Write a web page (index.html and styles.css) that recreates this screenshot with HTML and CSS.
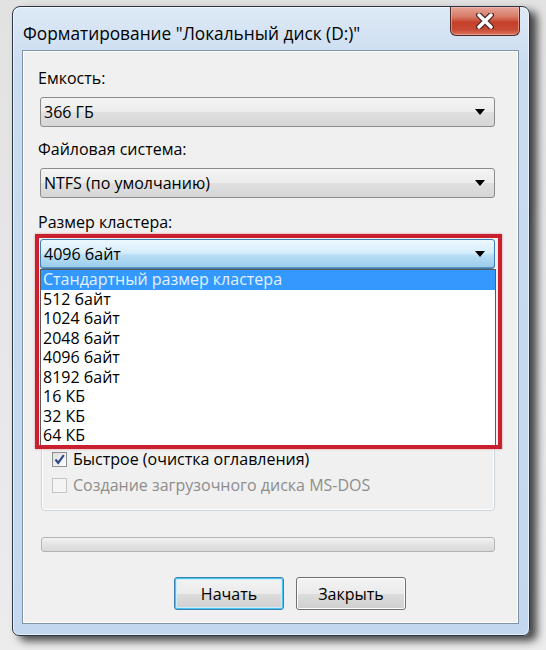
FILE: index.html
```html
<!DOCTYPE html>
<html lang="ru">
<head>
  <meta charset="UTF-8">
  <meta name="viewport" content="width=device-width, initial-scale=1.0">
  <title>Форматирование</title>
  <link rel="stylesheet" href="styles.css">
</head>
<body>
  <div class="window">
    <div class="titlebar">
      <span class="title">Форматирование "Локальный диск (D:)"</span>
      <button class="close" aria-label="Закрыть">
        <svg width="20" height="16" viewBox="0 0 20 16">
          <path d="M4 2 L16 14 M16 2 L4 14" stroke="#4a2a2a" stroke-width="6" stroke-linecap="round"/>
          <path d="M4 2 L16 14 M16 2 L4 14" stroke="#ffffff" stroke-width="3.4" stroke-linecap="round"/>
        </svg>
      </button>
    </div>

    <div class="client">
      <div class="field">
        <label class="label">Емкость:</label>
        <div class="combo"><span>366 ГБ</span><i class="arrow"></i></div>
      </div>

      <div class="field">
        <label class="label">Файловая система:</label>
        <div class="combo"><span>NTFS (по умолчанию)</span><i class="arrow"></i></div>
      </div>

      <div class="field cluster">
        <label class="label">Размер кластера:</label>
        <div class="combo-wrap">
          <div class="combo open"><span>4096 байт</span><i class="arrow"></i></div>
          <ul class="dropdown">
            <li class="selected">Стандартный размер кластера</li>
            <li>512 байт</li>
            <li>1024 байт</li>
            <li>2048 байт</li>
            <li>4096 байт</li>
            <li>8192 байт</li>
            <li>16 КБ</li>
            <li>32 КБ</li>
            <li>64 КБ</li>
          </ul>
          <div class="mark"></div>
        </div>
      </div>

      <div class="group">
        <label class="check">
          <span class="box">
            <svg width="13" height="13" viewBox="0 0 13 13">
              <path d="M2.5 6.5 L5.2 10 L10.8 2.2" fill="none" stroke="#2f4a86" stroke-width="2.2"/>
            </svg>
          </span>
          Быстрое (очистка оглавления)
        </label>
        <label class="check disabled">
          <span class="box"></span>
          Создание загрузочного диска MS-DOS
        </label>
      </div>

      <div class="progress"></div>

      <div class="actions">
        <button class="btn default">Начать</button>
        <button class="btn">Закрыть</button>
      </div>
    </div>
  </div>
</body>
</html>
```

FILE: styles.css
```css
* {
  box-sizing: border-box;
}
body {
  margin: 0;
  height: 650px;
  overflow: hidden;
  background: linear-gradient(#e2e2e2, #ececec);
  font-family: "Open Sans", "Noto Sans", sans-serif;
  font-size: 16px;
  color: #000;
}
.window {
  margin: 6px 0 0 12px;
  width: 518px;
  height: 630px;
  padding: 0 10px 11px 9px;
  border: 1px solid #2c3644;
  border-radius: 8px 8px 7px 7px;
  background: linear-gradient(#dde9f6, #c9dcf0 60px, #c3d8ee);
  box-shadow: 7px 5px 9px rgba(0, 0, 0, 0.7), inset 0 0 0 1px rgba(255, 255, 255, 0.6);
  display: flex;
  flex-direction: column;
}
.titlebar {
  height: 43px;
  display: flex;
  align-items: flex-start;
  justify-content: space-between;
}
.title {
  padding: 16px 0 0 1px;
  line-height: 22px;
  font-size: 17.3px;
}
.close {
  width: 70px;
  height: 29px;
  margin-right: -1px;
  padding: 0;
  border: 1px solid #4d2a2a;
  border-top: none;
  border-radius: 0 0 6px 6px;
  background: linear-gradient(#e6a597, #d77a66 35%, #c5402a 55%, #c94a34 80%, #d9725e);
  box-shadow: inset 0 0 0 1px rgba(255, 200, 190, 0.5);
  display: flex;
  align-items: center;
  justify-content: center;
}
.client {
  flex: 1;
  border: 1px solid #7f93a8;
  background: #f0f0f0;
  box-shadow: inset 0 0 0 1px #fff;
  padding: 16px 23px 0 17px;
  display: flex;
  flex-direction: column;
}
.field {
  display: flex;
  flex-direction: column;
  margin-bottom: 11px;
}
.label {
  line-height: 22px;
  margin: 0 0 8px -2px;
}
.cluster .label {
  margin-top: 2px;
  margin-bottom: 6px;
}
.combo {
  height: 30px;
  padding: 0 9px 0 3px;
  border: 1px solid #8b8b8b;
  border-radius: 3px;
  background: linear-gradient(#f4f4f4, #ececec 50%, #e0e0e0 50%, #d6d6d6);
  display: flex;
  align-items: center;
  justify-content: space-between;
  line-height: 20px;
}
.arrow {
  width: 0;
  height: 0;
  border-left: 5px solid transparent;
  border-right: 5px solid transparent;
  border-top: 6px solid #000;
}
.combo-wrap {
  position: relative;
}
.combo.open {
  border-color: #3c7fb1;
  background: linear-gradient(#edf7fd, #d6eefb 45%, #b7def5 55%, #99cbea);
  box-shadow: inset 0 -1px 0 #5f93bd;
}
.dropdown {
  position: absolute;
  top: 30px;
  left: 0;
  right: -1px;
  margin: 0;
  padding: 0;
  list-style: none;
  background: #fff;
  border: 1px solid #5a5a5a;
  z-index: 2;
}
.dropdown li {
  height: 19.5px;
  line-height: 19.5px;
  padding-left: 2px;
}
.dropdown li.selected {
  background: #3399ff;
  color: #e4f1ff;
}
.mark {
  position: absolute;
  top: -5px;
  left: -5px;
  right: -7px;
  height: 215px;
  border: 4px solid #c8202e;
  box-shadow: 0 0 2px rgba(210, 40, 50, 0.5);
  z-index: 3;
}
.group {
  height: 232px;
  margin: -1px 0 0 1px;
  padding: 0 0 12px 10px;
  border: 1px solid #cdd5db;
  border-radius: 4px;
  box-shadow: inset 0 0 0 1px #fff;
  display: flex;
  flex-direction: column;
  justify-content: flex-end;
}
.check {
  height: 26px;
  display: flex;
  align-items: center;
  gap: 6px;
}
.box {
  width: 15px;
  height: 15px;
  border: 1px solid #8e8f8f;
  background: linear-gradient(135deg, #dcdcdc, #fff);
  display: flex;
  align-items: center;
  justify-content: center;
}
.check.disabled {
  color: #8d8d8d;
}
.check.disabled .box {
  border-color: #c4c4c4;
  background: #f4f4f4;
}
.progress {
  height: 15px;
  margin: 26px 0 0 1px;
  border: 1px solid #b3b3b3;
  border-radius: 3px;
  background: linear-gradient(#f3f3f3, #e4e4e4 45%, #d9d9d9);
}
.actions {
  display: flex;
  gap: 12px;
  margin-top: 25px;
  padding-left: 134px;
}
.btn {
  width: 110px;
  height: 33px;
  padding: 0;
  font: inherit;
  color: #000;
  border: 1px solid #707070;
  border-radius: 3px;
  background: linear-gradient(#f3f3f3, #ebebeb 50%, #dddddd 50%, #cfcfcf);
  box-shadow: inset 0 0 0 1px #fcfcfc;
}
.btn.default {
  border-color: #3c7fb1;
  box-shadow: inset 0 0 0 1px #4cc4f0, inset 0 0 0 2px #c9eefc;
}
```
